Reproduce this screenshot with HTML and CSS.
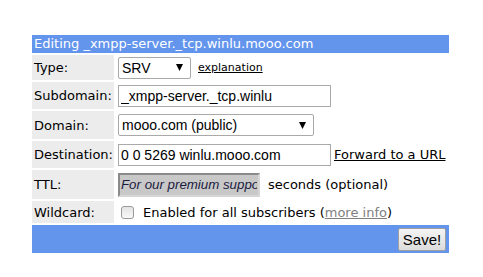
FILE: index.html
```html
<!DOCTYPE html>
<html lang="en">
<head>
<meta charset="UTF-8">
<link rel="stylesheet" href="styles.css">
<title>Edit subdomain</title>
</head>
<body>

  <form class="edit-form">
    <table class="edit-table">
      <colgroup>
        <col class="col-label">
        <col class="col-field">
      </colgroup>
      <tr>
        <td class="title" colspan="2">Editing _xmpp-server._tcp.winlu.mooo.com</td>
      </tr>
      <tr class="row-type">
        <td class="label">Type:</td>
        <td class="field">
          <div class="line">
            <select class="sel sel-type">
              <option>SRV</option>
            </select>
            <a class="small-link" href="#">explanation</a>
          </div>
        </td>
      </tr>
      <tr class="row-sub">
        <td class="label">Subdomain:</td>
        <td class="field">
          <div class="line"><input class="txt" type="text" value="_xmpp-server._tcp.winlu"></div>
        </td>
      </tr>
      <tr class="row-domain">
        <td class="label">Domain:</td>
        <td class="field">
          <div class="line">
            <select class="sel sel-domain">
              <option>mooo.com (public)</option>
            </select>
          </div>
        </td>
      </tr>
      <tr class="row-dest">
        <td class="label">Destination:</td>
        <td class="field">
          <div class="line">
            <input class="txt" type="text" value="0 0 5269 winlu.mooo.com">
            <a class="fwd-link" href="#">Forward to a URL</a>
          </div>
        </td>
      </tr>
      <tr class="row-ttl">
        <td class="label">TTL:</td>
        <td class="field">
          <div class="line">
            <input class="ttl" type="text" readonly value="For our premium supporters only">
            <span class="ttl-note">seconds (optional)</span>
          </div>
        </td>
      </tr>
      <tr class="row-wild">
        <td class="label">Wildcard:</td>
        <td class="field">
          <div class="line">
            <input class="chk" type="checkbox">
            <span>Enabled for all subscribers (<a class="more-link" href="#">more info</a>)</span>
          </div>
        </td>
      </tr>
      <tr>
        <td class="footer" colspan="2"><button class="save-btn" type="button">Save!</button></td>
      </tr>
    </table>
  </form>

</body>
</html>
```

FILE: styles.css
```css
body {
  margin: 0;
  background-color: #fff;
  font-family: "DejaVu Sans", Verdana, sans-serif;
  font-size: 13px;
  color: #000;
}

.edit-form {
  margin: 33px 0 0 32px;
}

/* main table */
.edit-table {
  width: 417px;
  border-collapse: separate;
  border-spacing: 0 2px;
  table-layout: fixed;
}

.col-label {
  width: 82px;
}

.col-field {
  width: 335px;
}

.edit-table td {
  padding: 0;
}

.title {
  background-color: #6495ed;
  color: #fff;
  height: 18px;
  padding-left: 2px !important;
  line-height: 18px;
  white-space: nowrap;
}

.label {
  background-color: #ececec;
  padding-left: 2px !important;
  white-space: nowrap;
}

.field {
  padding-left: 4px !important;
  white-space: nowrap;
}

.line {
  display: flex;
  align-items: center;
}

.row-type td { height: 25px; }
.row-sub td { height: 27px; }
.row-domain td { height: 28px; }
.row-dest td { height: 27px; }
.row-ttl td { height: 29px; }
.row-wild td { height: 22px; }

/* inputs */
.txt, .sel, .ttl {
  font-family: "Liberation Sans", Arial, sans-serif;
  font-size: 14px;
  box-sizing: border-box;
  height: 22px;
  margin: 0;
  flex: none;
}

.txt {
  width: 213px;
  border: 1px solid #a9a9a9;
  padding: 0 2px;
  color: #000;
}

.sel {
  -webkit-appearance: none;
  appearance: none;
  border: 1px solid #a9a9a9;
  border-radius: 2px;
  background: #fff url("data:image/svg+xml;utf8,<svg xmlns='http://www.w3.org/2000/svg' width='7' height='7'><path d='M0 0h7L3.5 7z' fill='black'/></svg>") no-repeat right 7px center;
  padding: 0 16px 0 3px;
  color: #000;
}

.sel-type {
  width: 73px;
}

.sel-domain {
  width: 196px;
}

.ttl {
  width: 142px;
  height: 24px;
  border: 2px solid;
  border-color: #8a8a8a #d6d6d6 #d6d6d6 #8a8a8a;
  background-color: #c8c8c8;
  font-size: 13.3px;
  font-style: italic;
  color: #1a1a40;
  padding: 0 1px;
}

.ttl-note {
  margin-left: 8px;
}

.small-link {
  font-size: 11px;
  color: #000;
  margin-left: 7px;
}

.fwd-link {
  color: #000;
  margin-left: 3px;
}

.more-link {
  color: #808080;
}

.chk {
  -webkit-appearance: none;
  appearance: none;
  flex: none;
  width: 13px;
  height: 13px;
  margin: 0 9px 0 3px;
  border: 1px solid #9a9a9a;
  border-radius: 3px;
  background: linear-gradient(#e4e4e4, #f8f8f8);
}

/* bottom bar */
.footer {
  background-color: #6495ed;
  height: 28px;
  text-align: right;
  padding-right: 3px !important;
}

.save-btn {
  font-family: "Liberation Sans", Arial, sans-serif;
  font-size: 15px;
  height: 23px;
  width: 48px;
  padding: 0;
  border: 1px solid #a0a0a0;
  border-radius: 2px;
  background: linear-gradient(#f4f4f4, #dcdcdc);
  color: #000;
  vertical-align: middle;
}
```
